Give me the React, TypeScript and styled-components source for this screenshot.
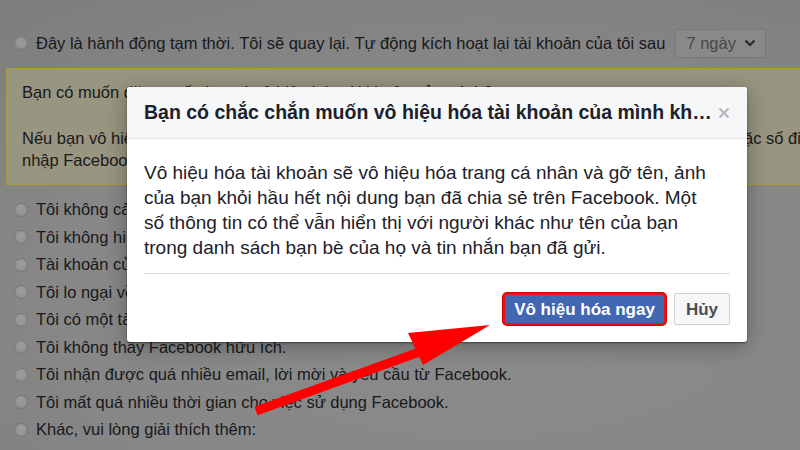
import React from "react";
import styled, { createGlobalStyle } from "styled-components";

const Global = createGlobalStyle`
  html, body { margin: 0; padding: 0; width: 800px; height: 450px; overflow: hidden; }
  body { font-family: "Liberation Sans", Arial, sans-serif; }
`;

const Page = styled.div`
  position: relative;
  width: 800px;
  height: 450px;
  overflow: hidden;
  background: radial-gradient(ellipse 90% 80% at 60% 65%, #8b8b8b 0%, #878787 60%, #7e7e7e 100%);
  color: #18191b;
  font-size: 16.5px;
`;

const Content = styled.div`
  display: flex;
  flex-direction: column;
  padding-top: 28px;
`;

const TopRow = styled.div`
  display: flex;
  align-items: center;
  height: 30px;
  padding-left: 14px;
  white-space: nowrap;
`;

const Radio = styled.span<{ $checked?: boolean }>`
  flex: none;
  width: 14px;
  height: 14px;
  border-radius: 50%;
  box-sizing: border-box;
  border: 1px solid ${(p) => (p.$checked ? "#7c7c7c" : "#767676")};
  background: ${(p) =>
    p.$checked
      ? "radial-gradient(circle, #979797 0 45%, #8c8c8c 75%)"
      : "radial-gradient(circle at 50% 40%, #9d9d9d, #8d8d8d)"};
  margin-right: 8px;
`;

const Select = styled.div`
  display: flex;
  align-items: center;
  justify-content: space-between;
  box-sizing: border-box;
  width: 91px;
  height: 29px;
  margin-left: 10px;
  padding: 0 9px 0 10px;
  border: 1px solid #787878;
  background: #898989;
  color: #474747;
  font-size: 16.5px;
`;

const Notice = styled.div`
  box-sizing: border-box;
  margin: 10px -40px 0 6px;
  height: 117px;
  padding: 12px 0 0 15px;
  border: 1px solid #aa9c3a;
  background: #989581;
  line-height: 22px;
  white-space: nowrap;
`;

const NoticePara = styled.p<{ $gap?: number }>`
  margin: ${(p) => p.$gap ?? 0}px 0 0;
`;

const List = styled.div`
  display: flex;
  flex-direction: column;
  margin-top: 11px;
`;

const Option = styled.div`
  display: flex;
  align-items: center;
  height: 27.5px;
  padding-left: 14px;
  white-space: nowrap;
`;

const Dialog = styled.div`
  position: absolute;
  left: 127px;
  top: 87px;
  width: 620px;
  display: flex;
  flex-direction: column;
  background: #fff;
  border-radius: 3px;
  box-shadow: 0 1px 2px rgba(0, 0, 0, 0.45), 0 4px 22px rgba(0, 0, 0, 0.3);
  overflow: hidden;
  color: #1d2129;
`;

const Header = styled.div`
  display: flex;
  align-items: center;
  height: 51px;
  padding: 0 17px 0 17px;
  background: #f6f7f9;
  border-bottom: 1px solid #e5e5e5;
`;

const Title = styled.h3`
  flex: 1;
  min-width: 0;
  margin: 0;
  font-size: 19.5px;
  font-weight: bold;
  white-space: nowrap;
  overflow: hidden;
  text-overflow: ellipsis;
`;

const Close = styled.span`
  flex: none;
  color: #b7b9bd;
  display: flex;
`;

const Body = styled.div`
  padding: 21px 17px 0;
`;

const BodyText = styled.p`
  margin: 0;
  font-size: 19px;
  line-height: 25px;
  white-space: nowrap;
`;

const Divider = styled.hr`
  margin: 13px 0 0;
  border: 0;
  border-top: 1px solid #dddfe2;
`;

const Footer = styled.div`
  display: flex;
  justify-content: flex-end;
  gap: 8px;
  padding: 19px 17px 17px;
`;

const Button = styled.button<{ $primary?: boolean }>`
  box-sizing: border-box;
  height: 32px;
  padding: ${(p) => (p.$primary ? "0 9px" : "0 11px")};
  border-radius: ${(p) => (p.$primary ? "4px" : "2px")};
  border: ${(p) => (p.$primary ? "2px solid #ee1111" : "1px solid #ccd0d5")};
  box-shadow: ${(p) => (p.$primary ? "0 0 0 1px #d40000" : "none")};
  background: ${(p) => (p.$primary ? "#4267b2" : "#f5f6f7")};
  color: ${(p) => (p.$primary ? "#fff" : "#4b4f56")};
  font-family: "Liberation Sans", Arial, sans-serif;
  font-size: 17px;
  font-weight: bold;
  line-height: 1;
`;

const Arrow = styled.svg`
  position: absolute;
  left: 0;
  top: 0;
  width: 800px;
  height: 450px;
  pointer-events: none;
`;

const options = [
  "Tôi không cảm thấy an toàn trên Facebook.",
  "Tôi không hiểu cách sử dụng Facebook.",
  "Tài khoản của tôi đã bị xâm phạm.",
  "Tôi lo ngại về quyền riêng tư.",
  "Tôi có một tài khoản Facebook khác.",
  "Tôi không thấy Facebook hữu ích.",
  "Tôi nhận được quá nhiều email, lời mời và yêu cầu từ Facebook.",
  "Tôi mất quá nhiều thời gian cho việc sử dụng Facebook.",
  "Khác, vui lòng giải thích thêm:",
];

export default function App() {
  return (
    <Page>
      <Global />
      <Content>
        <TopRow>
          <Radio $checked />
          Đây là hành động tạm thời. Tôi sẽ quay lại. Tự động kích hoạt lại tài khoản của tôi sau
          <Select>
            <span>7 ngày</span>
            <svg width="12" height="8" viewBox="0 0 12 8">
              <path d="M1.5 1.5 L6 6 L10.5 1.5" fill="none" stroke="#2a2a2a" strokeWidth="2.2" />
            </svg>
          </Select>
        </TopRow>
        <Notice>
          <NoticePara>Bạn có muốn đăng xuất thay vì vô hiệu hóa tài khoản của mình?</NoticePara>
          <NoticePara $gap={24}>
            Nếu bạn vô hiệu hóa tài khoản, bạn có thể kích hoạt lại bất cứ lúc nào bằng cách dùng lại email hoặc số điện thoại để đăng
          </NoticePara>
          <NoticePara>nhập Facebook bất cứ lúc nào.</NoticePara>
        </Notice>
        <List>
          {options.map((o) => (
            <Option key={o}>
              <Radio />
              {o}
            </Option>
          ))}
        </List>
      </Content>

      <Dialog>
        <Header>
          <Title>Bạn có chắc chắn muốn vô hiệu hóa tài khoản của mình không?</Title>
          <Close>
            <svg width="12" height="12" viewBox="0 0 12 12">
              <path d="M1.5 1.5 L10.5 10.5 M10.5 1.5 L1.5 10.5" stroke="currentColor" strokeWidth="2.4" />
            </svg>
          </Close>
        </Header>
        <Body>
          <BodyText>
            Vô hiệu hóa tài khoản sẽ vô hiệu hóa trang cá nhân và gỡ tên, ảnh
            <br />
            của bạn khỏi hầu hết nội dung bạn đã chia sẻ trên Facebook. Một
            <br />
            số thông tin có thể vẫn hiển thị với người khác như tên của bạn
            <br />
            trong danh sách bạn bè của họ và tin nhắn bạn đã gửi.
          </BodyText>
          <Divider />
        </Body>
        <Footer>
          <Button $primary>Vô hiệu hóa ngay</Button>
          <Button>Hủy</Button>
        </Footer>
      </Dialog>

      <Arrow viewBox="0 0 800 450">
        <line x1="256" y1="411" x2="425" y2="350" stroke="#ff0000" strokeWidth="9" />
        <polygon points="490,325 408,333 423,365" fill="#ff0000" />
      </Arrow>
    </Page>
  );
}
